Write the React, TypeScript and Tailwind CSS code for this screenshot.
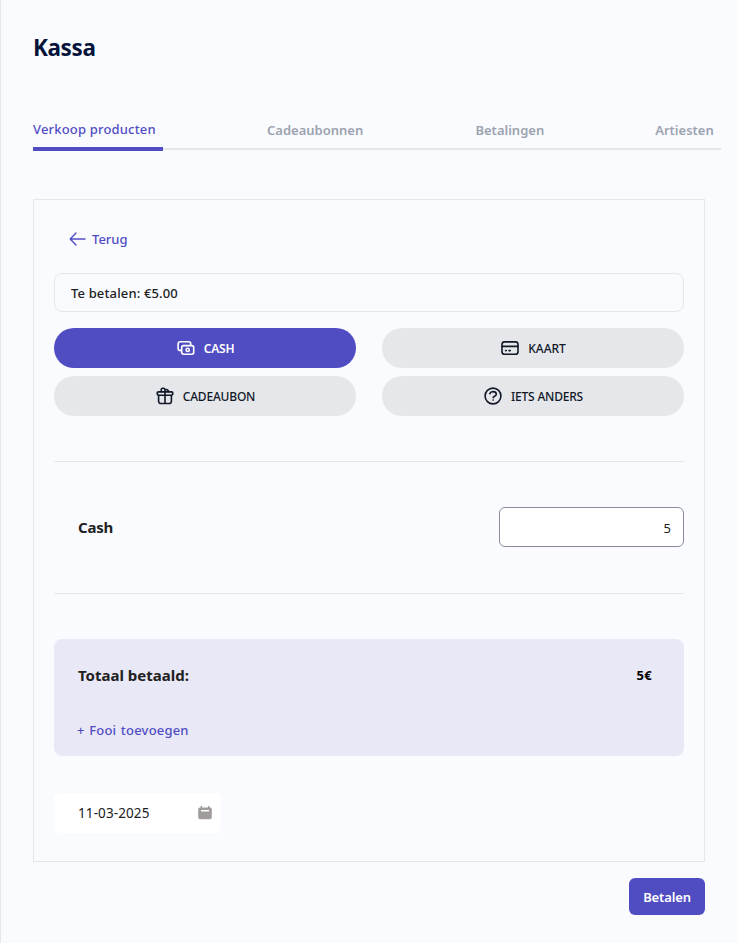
import React, { useState } from 'react';
import clsx from 'clsx';

const tabs = [
    { name: 'Verkoop producten', width: 'w-[130px]' },
    { name: 'Cadeaubonnen', width: 'w-[113px]' },
    { name: 'Betalingen', width: 'w-[85px]' },
    { name: 'Artiesten', width: 'w-[73px]' },
];

const CashIcon = () => (
    <svg width="20" height="20" viewBox="0 0 20 20" fill="none" stroke="currentColor" strokeWidth="1.6" strokeLinecap="round" strokeLinejoin="round">
        <path d="M5.2 12.4H4.1a2 2 0 0 1-2-2V5.8a2 2 0 0 1 2-2h8.6a2 2 0 0 1 2 2v1.4" />
        <rect x="5.7" y="7.6" width="12" height="8.6" rx="1.9" />
        <circle cx="11.7" cy="11.9" r="1.6" />
    </svg>
);

const CardIcon = () => (
    <svg width="20" height="20" viewBox="0 0 20 20" fill="none" stroke="currentColor" strokeWidth="1.6" strokeLinecap="round" strokeLinejoin="round">
        <rect x="2" y="3.9" width="16" height="12.4" rx="2.6" />
        <path d="M2 8.4h16M5.6 12.6h.6M9 12.6h1.3" />
    </svg>
);

const GiftIcon = () => (
    <svg width="20" height="20" viewBox="0 0 20 20" fill="none" stroke="currentColor" strokeWidth="1.6" strokeLinecap="round" strokeLinejoin="round">
        <rect x="2.1" y="5.9" width="15.8" height="3.3" rx="1.6" />
        <path d="M3.6 9.2v6a2.3 2.3 0 0 0 2.3 2.3h8.2a2.3 2.3 0 0 0 2.3-2.3v-6M10 5.9v11.6" />
        <path d="M6.2 5.6V4.3a1.8 1.8 0 0 1 3.8-.4v1.7M10 3.9c1.4-.7 3.4-.3 3.5 1.7" />
    </svg>
);

const HelpIcon = () => (
    <svg width="20" height="20" viewBox="0 0 20 20" fill="none" stroke="currentColor" strokeWidth="1.6" strokeLinecap="round" strokeLinejoin="round">
        <circle cx="10" cy="10" r="7.9" />
        <path d="M6.8 7.6C7.3 6.3 8.5 5.6 10 5.6c1.9 0 3.3 1 3.3 2.6 0 2-3.1 2-3.1 3.5M10.1 14v.1" />
    </svg>
);

const methods = [
    { name: 'CASH', icon: CashIcon, spacing: 'tracking-[-0.2px]' },
    { name: 'KAART', icon: CardIcon, spacing: 'tracking-[-0.05px]' },
    { name: 'CADEAUBON', icon: GiftIcon, spacing: 'tracking-[-0.2px]' },
    { name: 'IETS ANDERS', icon: HelpIcon, spacing: 'tracking-[-0.2px]' },
];

const App = () => {
    const [activeTab, setActiveTab] = useState('Verkoop producten');
    const [method, setMethod] = useState('CASH');
    const [amount, setAmount] = useState('5');

    return (
        <div className="h-[943px] border-l border-[#e5e7eb] bg-[#fafbff] pl-8 font-['Noto_Sans',sans-serif] text-[#212121]">
            <h1 className="pt-8 text-[22.5px] leading-8 font-bold tracking-[-0.4px] text-[#06133a]">Kassa</h1>

            {/* Tabs */}
            <div className="mt-[45px] mr-4 flex h-[42px] items-end justify-between bg-[linear-gradient(#e5e7eb,#e5e7eb)] bg-[length:100%_2px] bg-[position:0_39px] bg-no-repeat">
                {tabs.map((tab) => (
                    <button
                        key={tab.name}
                        onClick={() => setActiveTab(tab.name)}
                        className={clsx(
                            'h-[42px] text-[13px] leading-5 whitespace-nowrap',
                            tab.width,
                            activeTab === tab.name
                                ? 'border-b-4 border-[#504dc3] pt-0.5 text-left font-medium tracking-[0.18px] text-[#504dc3]'
                                : 'text-center font-semibold text-[#9ca3af]'
                        )}
                    >
                        {tab.name}
                    </button>
                ))}
            </div>

            <div className="mt-12 h-[663px] w-[672px] border border-[#e5e7eb] px-5">
                <button className="mt-[29px] ml-[15px] flex h-5 items-center gap-[5px] text-[13px] font-medium text-[#504dc3]">
                    <svg width="18" height="14" viewBox="0 0 18 14" fill="none" stroke="currentColor" strokeWidth="1.4" strokeLinecap="round" strokeLinejoin="round">
                        <path d="M16 7H1.2M7 1 1.2 7 7 13" />
                    </svg>
                    <span className="pt-px">Terug</span>
                </button>

                <div className="mt-6 flex h-[39px] items-center rounded-lg border border-[#e5e7eb] px-4 pt-0.5 text-[13px] font-medium tracking-[0.14px]">
                    Te betalen: €5.00
                </div>

                {/* Payment methods */}
                <div className="mt-4 grid grid-cols-2 gap-x-[26px] gap-y-2">
                    {methods.map((m) => (
                        <button
                            key={m.name}
                            onClick={() => setMethod(m.name)}
                            className={clsx(
                                'flex h-10 items-center justify-center gap-2 rounded-full text-xs',
                                m.spacing,
                                method === m.name ? 'bg-[#504dc3] font-semibold text-white' : 'bg-[#e5e7eb] font-medium text-[#111827]'
                            )}
                        >
                            <m.icon />
                            <span className="pt-0.5">{m.name}</span>
                        </button>
                    ))}
                </div>

                <div className="mt-[45px] flex h-[133px] items-center justify-between border-y border-[#e5e7eb] pl-6">
                    <label htmlFor="cash" className="text-[15px] font-bold tracking-[-0.2px]">Cash</label>
                    <input
                        id="cash"
                        value={amount}
                        onChange={(e) => setAmount(e.target.value)}
                        className="mb-px h-10 w-[185px] rounded-md border border-[#8c899f] bg-white px-3 pt-0.5 text-right text-[13px] outline-none"
                    />
                </div>

                <div className="mt-[45px] h-[117px] rounded-lg bg-[#e9e8f6] pt-[26px] pr-8 pl-6">
                    <div className="flex h-5 items-center justify-between">
                        <span className="text-[15px] font-bold">Totaal betaald:</span>
                        <span className="pt-px text-[13px] font-bold tracking-[0.3px] text-black">{amount}€</span>
                    </div>
                    <button className="mt-[35px] -ml-px block h-5 text-[13px] leading-5 font-medium tracking-[0.2px] text-[#504dc3] [word-spacing:1px]">+ Fooi toevoegen</button>
                </div>

                <div className="mt-[37px] flex h-10 w-[167px] items-center justify-between rounded-md bg-white pr-[9px] pl-6 text-[13.5px] tracking-[0.1px]">
                    <span className="pt-px">11-03-2025</span>
                    <svg width="14" height="14" viewBox="0 0 14 14" fill="#a19c9c">
                        <path d="M2.6 0h1.4v1.4h6V0h1.4v1.4h.6a1.8 1.8 0 0 1 1.8 1.8v8.3a1.8 1.8 0 0 1-1.8 1.8H2A1.8 1.8 0 0 1 .2 11.5V3.2A1.8 1.8 0 0 1 2 1.4h.6zM3 4v1.5h8V4z" fillRule="evenodd" />
                    </svg>
                </div>
            </div>

            <div className="mt-4 flex w-[672px] justify-end">
                <button className="h-[37px] w-[76px] rounded-md bg-[#504dc3] pt-0.5 text-[13px] font-semibold tracking-[-0.15px] text-white">Betalen</button>
            </div>
        </div>
    );
};

export default App;
